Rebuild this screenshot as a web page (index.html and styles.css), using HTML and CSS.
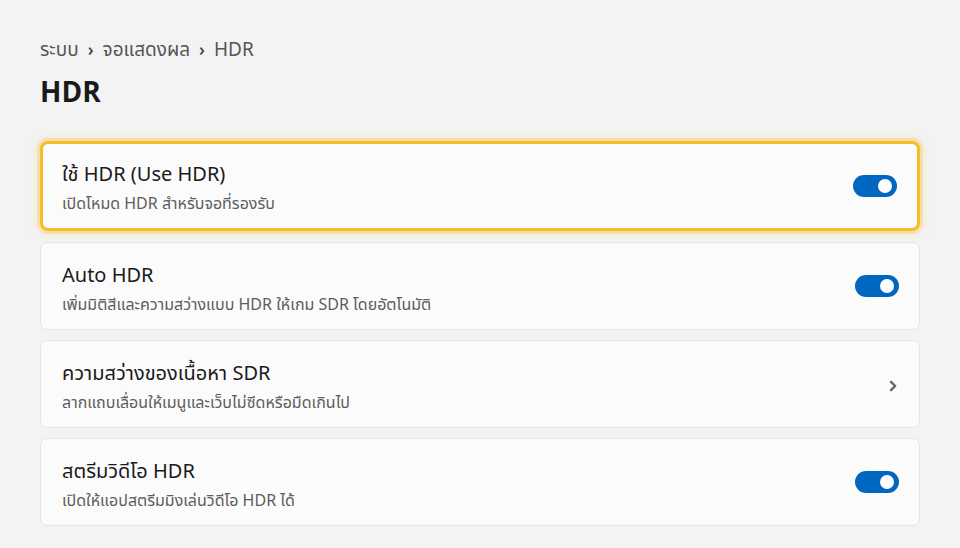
FILE: index.html
```html
<!DOCTYPE html>
<html lang="th">
<head>
<meta charset="utf-8">
<title>HDR</title>
<link rel="stylesheet" href="styles.css">
</head>
<body>
<main class="page">
  <nav class="crumbs">
    <span>ระบบ</span><span class="sep">›</span><span>จอแสดงผล</span><span class="sep">›</span><span>HDR</span>
  </nav>
  <h1 class="title">HDR</h1>
  <section class="list">
    <div class="card focused">
      <div class="text">
        <div class="name">ใช้ HDR (Use HDR)</div>
        <div class="desc">เปิดโหมด HDR สำหรับจอที่รองรับ</div>
      </div>
      <span class="toggle on"><span class="knob"></span></span>
    </div>
    <div class="card">
      <div class="text">
        <div class="name">Auto HDR</div>
        <div class="desc">เพิ่มมิติสีและความสว่างแบบ HDR ให้เกม SDR โดยอัตโนมัติ</div>
      </div>
      <span class="toggle on"><span class="knob"></span></span>
    </div>
    <div class="card">
      <div class="text">
        <div class="name">ความสว่างของเนื้อหา SDR</div>
        <div class="desc">ลากแถบเลื่อนให้เมนูและเว็บไม่ซีดหรือมืดเกินไป</div>
      </div>
      <svg class="chev" width="10" height="14" viewBox="0 0 10 14"><path d="M3 2.8 L7.2 7 L3 11.2" fill="none" stroke="#666666" stroke-width="2.4" stroke-linecap="round" stroke-linejoin="round"/></svg>
    </div>
    <div class="card">
      <div class="text">
        <div class="name">สตรีมวิดีโอ HDR</div>
        <div class="desc">เปิดให้แอปสตรีมมิงเล่นวิดีโอ HDR ได้</div>
      </div>
      <span class="toggle on"><span class="knob"></span></span>
    </div>
  </section>
</main>
</body>
</html>
```
FILE: styles.css
```css
* { box-sizing: border-box; }
html, body { margin: 0; padding: 0; }
body {
  background: #f3f3f3;
  font-family: "Noto Sans Thai", "Noto Sans", "DejaVu Sans", sans-serif;
  color: #1b1b1b;
  width: 960px;
  height: 548px;
  overflow: hidden;
}
.page {
  padding: 37px 40px 0 40px;
}
.crumbs {
  font-size: 19px;
  line-height: 28px;
  color: #555555;
  display: flex;
  gap: 9px;
  align-items: center;
}
.crumbs .sep { font-size: 17px; color: #444444; font-weight: 600; }
.title {
  margin: 11px 0 0 0;
  font-size: 28px;
  line-height: 36px;
  font-weight: 700;
  color: #1a1a1a;
}
.list {
  margin-top: 29px;
  display: flex;
  flex-direction: column;
  gap: 10px;
}
.card {
  height: 88px;
  background: #fbfbfb;
  border: 1px solid #e5e5e5;
  border-radius: 7px;
  display: flex;
  align-items: center;
  justify-content: space-between;
  padding: 5px 20px 0 21px;
}
.card.focused {
  height: 90px;
  border: 3px solid #f7bd2a;
  border-radius: 8px;
  padding: 4px 20px 0 19px;
  box-shadow: 0 0 0 3px rgba(247, 189, 42, 0.28), 0 0 8px 3px rgba(247, 189, 42, 0.18);
  margin-bottom: 1px;
}
.text { display: flex; flex-direction: column; gap: 6px; }
.name { font-size: 20px; line-height: 26px; color: #1a1a1a; }
.desc { font-size: 16px; line-height: 20px; color: #5d5d5d; }
.toggle {
  width: 44px;
  height: 22px;
  border-radius: 11px;
  background: #0067c0;
  position: relative;
  flex: none;
  margin-top: -5px;
}
.focused .toggle { margin-top: -4px; }
.toggle .knob {
  position: absolute;
  right: 5px;
  top: 4px;
  width: 14px;
  height: 14px;
  border-radius: 50%;
  background: #ffffff;
}
.chev { flex: none; margin-right: 1px; margin-top: -2px; }
```
